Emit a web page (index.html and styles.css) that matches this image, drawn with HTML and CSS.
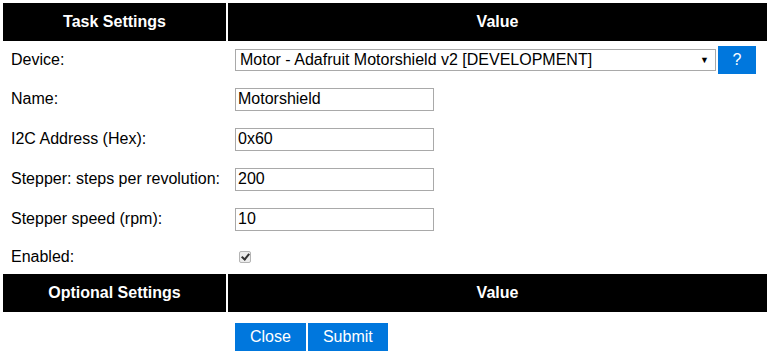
FILE: index.html
```html
<!DOCTYPE html>
<html>
<head>
<meta charset="utf-8">
<link rel="stylesheet" href="styles.css">
</head>
<body>
<div class="wrap">
<table class="normal">
  <tr class="hrow">
    <th class="col-l">Task Settings</th>
    <th class="col-r">Value</th>
  </tr>
  <tr class="r-dev">
    <td class="lbl">Device:</td>
    <td class="val">
      <div class="devline">
        <div class="select"><span>Motor - Adafruit Motorshield v2 [DEVELOPMENT]</span><span class="arrow">&#9660;</span></div>
        <button class="button help">?</button>
      </div>
    </td>
  </tr>
  <tr class="r">
    <td class="lbl">Name:</td>
    <td class="val"><input class="wide" type="text" value="Motorshield"></td>
  </tr>
  <tr class="r">
    <td class="lbl">I2C Address (Hex):</td>
    <td class="val"><input class="wide" type="text" value="0x60"></td>
  </tr>
  <tr class="r">
    <td class="lbl">Stepper: steps per revolution:</td>
    <td class="val"><input class="wide" type="text" value="200"></td>
  </tr>
  <tr class="r">
    <td class="lbl">Stepper speed (rpm):</td>
    <td class="val"><input class="wide" type="text" value="10"></td>
  </tr>
  <tr class="r-en">
    <td class="lbl">Enabled:</td>
    <td class="val"><span class="cb"></span></td>
  </tr>
  <tr class="hrow">
    <th class="col-l">Optional Settings</th>
    <th class="col-r">Value</th>
  </tr>
  <tr class="r-btn">
    <td class="lbl"></td>
    <td class="val btns"><button class="button">Close</button><button class="button">Submit</button></td>
  </tr>
</table>
</div>
</body>
</html>
```

FILE: styles.css
```css
html, body {
  margin: 0;
  padding: 0;
  background: #fff;
}
body {
  font-family: "Liberation Sans", Arial, sans-serif;
  font-size: 16px;
  color: #000;
}
.wrap {
  padding: 3px 1px 0 1px;
}
table.normal {
  width: 768px;
  border-collapse: separate;
  border-spacing: 2px 0;
  margin: 0;
  table-layout: fixed;
}
.col-l { width: 223px; }
.col-r { width: auto; }
th {
  background: #000;
  color: #fff;
  font-weight: bold;
  font-size: 16px;
  text-align: center;
  padding: 0;
}
.hrow { height: 38px; }
.r-dev { height: 38px; }
.r { height: 40px; }
.r-en { height: 35px; }
.r-btn { height: 50px; }
td {
  padding: 0;
  vertical-align: middle;
}
td.lbl {
  padding-left: 8px;
  white-space: nowrap;
}
td.val {
  padding-left: 7px;
}
.devline {
  display: flex;
  align-items: center;
  gap: 2px;
}
.select {
  width: 481px;
  height: 22px;
  box-sizing: border-box;
  border: 1px solid #a9a9a9;
  display: flex;
  align-items: center;
  justify-content: space-between;
  padding: 0 6px 0 4px;
  font-size: 16px;
  line-height: 20px;
}
.arrow {
  font-size: 9px;
  color: #000;
}
input.wide {
  width: 199px;
  height: 23px;
  box-sizing: border-box;
  border: 1px solid #a9a9a9;
  padding: 0 2px;
  margin: 0;
  font-family: "Liberation Sans", Arial, sans-serif;
  font-size: 16px;
  color: #000;
  outline: none;
}
.button {
  background: #0077dd;
  color: #fff;
  border: none;
  height: 28px;
  padding: 0 15px;
  font-family: "Liberation Sans", Arial, sans-serif;
  font-size: 16px;
  line-height: 28px;
  margin: 0;
  cursor: pointer;
}
.help {
  width: 38px;
  padding: 0;
}
.btns {
  padding-left: 8px;
}
.btns .button + .button {
  margin-left: 2px;
}
.cb {
  display: inline-block;
  position: relative;
  width: 12px;
  height: 12px;
  box-sizing: border-box;
  border: 1px solid #b4b4b4;
  border-radius: 2px;
  background: #ececec;
  margin-left: 4px;
  margin-top: 4px;
}
.cb::after {
  content: "";
  position: absolute;
  left: 3px;
  top: 0px;
  width: 3px;
  height: 6px;
  border-right: 2px solid #333;
  border-bottom: 2px solid #333;
  transform: rotate(40deg);
}
```
